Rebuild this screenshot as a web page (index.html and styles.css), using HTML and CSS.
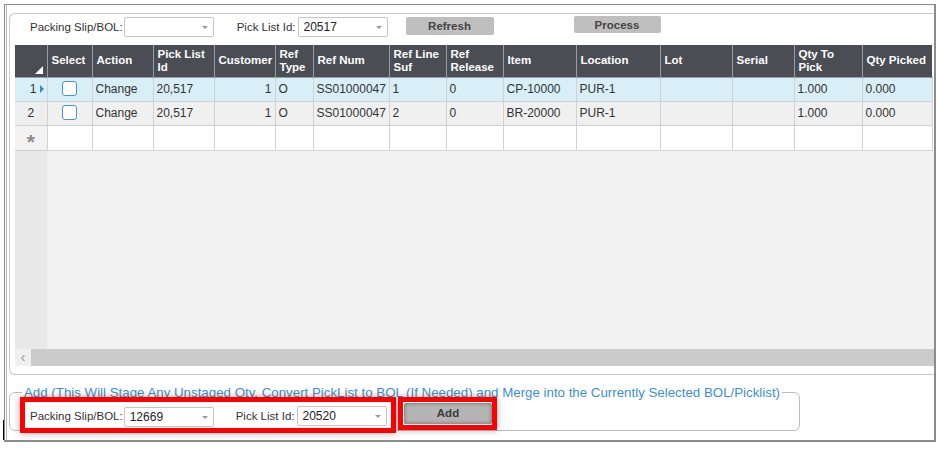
FILE: index.html
```html
<!DOCTYPE html>
<html lang="en">
<head>
  <meta charset="UTF-8">
  <title>Pick List to BOL</title>
  <link rel="stylesheet" href="styles.css">
</head>
<body>

  <!-- window frame -->
  <div class="frame">

    <!-- top panel: filters + grid -->
    <div class="panel">
      <div class="toolbar">
        <span class="field-label">Packing Slip/BOL:</span>
        <div class="combo"><span class="combo-value"></span><span class="combo-arrow"></span></div>
        <span class="field-label second">Pick List Id:</span>
        <div class="combo"><span class="combo-value">20517</span><span class="combo-arrow"></span></div>
        <button class="btn btn-refresh">Refresh</button>
        <button class="btn btn-process">Process</button>
      </div>

      <div class="grid">
        <table class="grid-table">
          <colgroup>
            <col style="width:32px"><col style="width:45px"><col style="width:61px"><col style="width:61px">
            <col style="width:61px"><col style="width:38px"><col style="width:76px"><col style="width:57px">
            <col style="width:57px"><col style="width:73px"><col style="width:84px"><col style="width:72px">
            <col style="width:62px"><col style="width:68px"><col style="width:70px">
          </colgroup>
          <thead>
            <tr>
              <th class="corner"><span class="corner-mark"></span></th>
              <th>Select</th>
              <th>Action</th>
              <th>Pick List<br>Id</th>
              <th>Customer</th>
              <th>Ref<br>Type</th>
              <th>Ref Num</th>
              <th>Ref Line<br>Suf</th>
              <th>Ref<br>Release</th>
              <th>Item</th>
              <th>Location</th>
              <th>Lot</th>
              <th>Serial</th>
              <th>Qty To<br>Pick</th>
              <th>Qty Picked</th>
            </tr>
          </thead>
          <tbody>
            <tr class="row-current">
              <td class="rowhead rowhead-current">1<span class="row-pointer"></span></td>
              <td class="cell-check"><span class="checkbox"></span></td>
              <td>Change</td>
              <td>20,517</td>
              <td class="num">1</td>
              <td>O</td>
              <td class="num">SS01000047</td>
              <td>1</td>
              <td>0</td>
              <td>CP-10000</td>
              <td>PUR-1</td>
              <td></td>
              <td></td>
              <td>1.000</td>
              <td>0.000</td>
            </tr>
            <tr class="row-alt">
              <td class="rowhead">2</td>
              <td class="cell-check"><span class="checkbox"></span></td>
              <td>Change</td>
              <td>20,517</td>
              <td class="num">1</td>
              <td>O</td>
              <td class="num">SS01000047</td>
              <td>2</td>
              <td>0</td>
              <td>BR-20000</td>
              <td>PUR-1</td>
              <td></td>
              <td></td>
              <td>1.000</td>
              <td>0.000</td>
            </tr>
            <tr class="row-new">
              <td class="rowhead rowhead-new"><span class="new-star">*</span></td>
              <td></td><td></td><td></td><td></td><td></td><td></td><td></td>
              <td></td><td></td><td></td><td></td><td></td><td></td><td></td>
            </tr>
          </tbody>
        </table>
        <div class="grid-empty"><div class="grid-empty-rowhead"></div></div>
        <div class="hscroll">
          <span class="hscroll-btn">&lsaquo;</span>
          <div class="hscroll-track"></div>
        </div>
      </div>
    </div>

    <!-- add section -->
    <fieldset class="add-box">
      <legend>Add (This Will Stage Any Unstaged Qty, Convert PickList to BOL (If Needed) and Merge into the Currently Selected BOL/Picklist)</legend>
      <div class="add-row">
        <div class="mark mark-fields">
          <span class="field-label">Packing Slip/BOL:</span>
          <div class="combo combo-low"><span class="combo-value">12669</span><span class="combo-arrow"></span></div>
          <span class="field-label second">Pick List Id:</span>
          <div class="combo"><span class="combo-value">20520</span><span class="combo-arrow"></span></div>
        </div>
        <div class="mark mark-btn">
          <button class="btn btn-add">Add</button>
        </div>
      </div>
    </fieldset>

    <span class="caret"></span>
  </div>

</body>
</html>
```

FILE: styles.css
```css
/* base */
body {
  margin: 0;
  font-family: "Liberation Sans", Arial, sans-serif;
  font-size: 11.5px;
  color: #333333;
  background: #ffffff;
}

/* outer window frame */
.frame {
  position: relative;
  box-sizing: border-box;
  width: 932px;
  height: 438px;
  margin: 4px 0 0 4px;
  border: 1px solid #8c8c8c;
  border-right-width: 2px;
  border-bottom-width: 2px;
  box-shadow: inset 1px 0 0 #ffffff, inset 2px 0 0 #b4b4b4;
}

/* top panel */
.panel {
  margin: 8px 0 0 4px;
  border: 1px solid #c9c9c9;
  border-right: none;
  border-radius: 6px 0 0 6px;
  padding: 0 0 8px 0;
}

.toolbar {
  display: flex;
  align-items: flex-start;
  height: 31px;
  padding-left: 20px;
}

.field-label {
  line-height: 20px;
  margin-top: 3px;
  margin-right: 1px;
  color: #333333;
}

.field-label.second {
  margin-left: 23px;
  margin-right: 2px;
}

/* combo boxes */
.combo {
  position: relative;
  box-sizing: border-box;
  width: 90px;
  height: 20px;
  margin-top: 3px;
  border: 1px solid #c4c4c4;
  border-radius: 2px;
  background: #ffffff;
}

.combo-value {
  display: block;
  padding-left: 5px;
  line-height: 18px;
  font-size: 12px;
  color: #222222;
}

.combo-arrow {
  position: absolute;
  right: 5px;
  top: 8px;
  border-left: 3px solid transparent;
  border-right: 3px solid transparent;
  border-top: 3px solid #999999;
}

/* buttons */
.btn {
  box-sizing: border-box;
  width: 88px;
  border: none;
  border-radius: 2px;
  background: #bfbfbf;
  color: #444444;
  font-family: inherit;
  font-size: 11.5px;
  font-weight: bold;
  padding: 0;
}

.btn-refresh {
  height: 18px;
  margin: 3px 0 0 18px;
}

.btn-process {
  height: 17px;
  margin: 2px 0 0 80px;
  width: 87px;
}

/* grid */
.grid {
  margin-left: 5px;
}

.grid-table {
  border-collapse: collapse;
  table-layout: fixed;
  width: 917px;
}

.grid-table th {
  height: 32px;
  padding: 0 4px;
  box-sizing: border-box;
  background: #4a4d54;
  color: #ffffff;
  font-size: 11.5px;
  font-weight: bold;
  line-height: 13px;
  text-align: left;
  white-space: nowrap;
  border-left: 1px solid #9a9ca1;
  border-bottom: 1px solid #9a9ca1;
}

.grid-table th.corner {
  position: relative;
  border-left: none;
}

.corner-mark {
  position: absolute;
  right: 4px;
  bottom: 3px;
  border-left: 8px solid transparent;
  border-bottom: 8px solid #ffffff;
}

.grid-table td {
  height: 24px;
  padding: 0 3px;
  box-sizing: border-box;
  border: 1px solid #d2d2d2;
  font-size: 12px;
  color: #333333;
  white-space: nowrap;
  overflow: hidden;
}

.grid-table td.num {
  text-align: right;
}

.row-current td {
  background: #d8eff7;
}

.row-alt td {
  background: #f0f0f0;
}

.row-new td {
  background: #ffffff;
  height: 25px;
}

.grid-table td.rowhead {
  text-align: center;
  color: #333333;
  border-left: none;
}

.row-alt td.rowhead {
  background: #eeeeee;
}

.rowhead-current {
  text-align: right !important;
  padding-right: 6px;
}

.row-pointer {
  display: inline-block;
  margin-left: 3px;
  border-top: 4px solid transparent;
  border-bottom: 4px solid transparent;
  border-left: 4px solid #2d8fd6;
}

.row-new td.rowhead-new {
  background: #f3f3f3;
  overflow: visible;
}

.new-star {
  display: inline-block;
  height: 14px;
  color: #8a8a8a;
  font-size: 21px;
  font-weight: bold;
  line-height: 21px;
  vertical-align: middle;
}

.cell-check {
  text-align: center;
}

.checkbox {
  display: inline-block;
  box-sizing: border-box;
  width: 15px;
  height: 15px;
  margin-top: 2px;
  border: 1.5px solid #4a93cf;
  border-radius: 3px;
  background: #ffffff;
}

.grid-empty {
  height: 198px;
  background: #f2f2f2;
}

.grid-empty-rowhead {
  width: 32px;
  height: 100%;
  background: #e8e8e8;
}

.hscroll {
  display: flex;
  height: 17px;
}

.hscroll-btn {
  width: 16px;
  background: #f0f0f0;
  color: #9a9a9a;
  font-size: 15px;
  line-height: 15px;
  text-align: center;
}

.hscroll-track {
  flex: 1;
  background: #cbcbcb;
}

/* add section */
.add-box {
  box-sizing: border-box;
  width: 791px;
  margin: 10px 0 0 4px;
  padding: 0 0 0 10px;
  border: 1px solid #bdbdbd;
  border-radius: 6px;
}

.add-box legend {
  padding: 0 2px;
  margin-left: 2px;
  color: #3d8fd1;
  font-size: 13.3px;
  line-height: 15px;
}

.add-row {
  display: flex;
  margin: -3px 0 -3px 0;
}

.mark {
  box-sizing: border-box;
  border: 5px solid #ff0000;
  box-shadow: 0 0 7px rgba(0, 0, 0, 0.35);
}

.mark-fields {
  display: flex;
  align-items: flex-start;
  width: 376px;
  height: 36px;
  padding-left: 5px;
}

.mark-fields .field-label {
  margin-top: 4px;
}

.mark-fields .combo {
  margin-top: 4px;
}

.mark-fields .combo-low {
  margin-top: 5px;
}

.mark-fields .field-label.second {
  margin-left: 22px;
}

.mark-btn {
  width: 99px;
  height: 33px;
  margin-left: 2px;
  padding: 1px 0 0 1px;
}

.btn-add {
  height: 21px;
  width: 88px;
  background: #b4b4b4;
  box-shadow: inset 0 0 4px rgba(0, 0, 0, 0.45);
  color: #3a3a3a;
}

/* stray text caret at the bottom left */
.caret {
  position: absolute;
  left: -2px;
  top: 415px;
  width: 1px;
  height: 20px;
  background: #000000;
}
```
